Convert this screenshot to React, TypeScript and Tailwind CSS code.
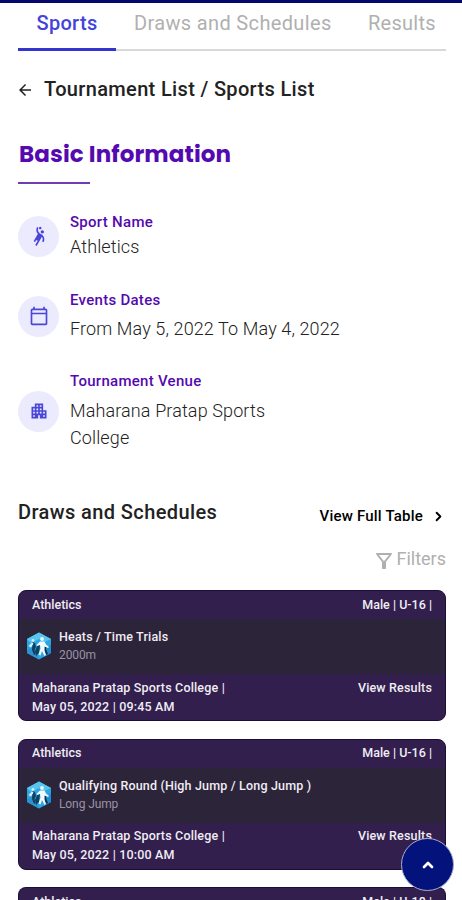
import React from 'react';
import {
  MdArrowBack,
  MdSportsHandball,
  MdOutlineCalendarToday,
  MdOutlineApartment,
  MdOutlineFilterAlt,
} from 'react-icons/md';
import { ChevronRight, ChevronUp } from 'lucide-react';

interface Fixture {
  title: string;
  event: string;
  category: string;
  time: string;
}

const fixtures: Fixture[] = [
  { title: 'Heats / Time Trials', event: '2000m', category: 'Male | U-16 |', time: 'May 05, 2022 | 09:45 AM' },
  { title: 'Qualifying Round (High Jump / Long Jump )', event: 'Long Jump', category: 'Male | U-16 |', time: 'May 05, 2022 | 10:00 AM' },
];

const AthleticsLogo: React.FC = () => (
  <svg viewBox="0 0 26 28" className="w-[26px] h-7 shrink-0">
    <path d="M13 0.5 25 7v14l-12 6.5L1 21V7z" fill="#2ba6e3" />
    <path d="M13 0.5 25 7l-7 3-5-3-8 4-4-4z" fill="#58c5ef" />
    <path d="M1 18l7-3 5 12.5L1 21z" fill="#2b93cf" />
    <path d="M18 19l7-7v9l-7 4z" fill="#1c8dd1" />
    <path d="M12 12l2 1-1 8-3 3-1-5z" fill="#12405f" />
    <path d="M19 12l2 2-1 3 2 5-2 1-2-5z" fill="#0f3450" />
    <circle cx="16" cy="7" r="1.9" fill="#e9f8ff" />
    <path d="M14 9.500h4.500l1.500 3 3 2.500-1 1-3.500-1.500v4l1.500 4.500-1.500 1-2.500-5-1.500 4.500-2-1 2-6-.5-3.500-2.500 1-1-1z" fill="#f1fbff" />
    <path d="M6.500 10l2.500 1 1 4-1.500 3 1 4-1.500 1-2-5z" fill="#12405f" />
    <circle cx="7" cy="8.500" r="1.400" fill="#c5ecfb" />
    <path d="M2.500 14l3.500-3.500 1.500 1-2.500 4z" fill="#d8f3fd" />
  </svg>
);

interface InfoRowProps {
  icon: React.ReactNode;
  label: string;
  className: string;
  valueClassName: string;
  children: React.ReactNode;
}

const InfoRow: React.FC<InfoRowProps> = ({ icon, label, className, valueClassName, children }) => (
  <div className={`flex items-center gap-[11px] ${className}`}>
    <div className="flex w-[41px] h-[41px] shrink-0 items-center justify-center rounded-full bg-[#ecebfe] text-[#4a46d8]">
      {icon}
    </div>
    <div>
      <div className="text-[15px] leading-5 font-medium tracking-[0.28px] text-[#5509b0]">{label}</div>
      <div className={`text-[18px] leading-[27px] font-light tracking-[0.12px] text-[#222222] ${valueClassName}`}>
        {children}
      </div>
    </div>
  </div>
);

const CardHeader: React.FC<{ category: string }> = ({ category }) => (
  <div className="flex h-7 items-center justify-between px-[13px]">
    <span className="tracking-normal">Athletics</span>
    <span className="tracking-normal">{category}</span>
  </div>
);

const FixtureCard: React.FC<{ fixture: Fixture }> = ({ fixture }) => (
  <div className="h-[131px] shrink-0 overflow-hidden rounded-lg border border-[#1c0c3b] bg-[#321f4d] text-[12.5px] font-medium tracking-[0.17px] text-[#f0edf4]">
    <CardHeader category={fixture.category} />
    <div className="flex h-[55px] items-center gap-[7px] bg-[#2c2439] pb-px pl-[7px]">
      <AthleticsLogo />
      <div className="leading-[18px]">
        <div>{fixture.title}</div>
        <div className="text-[12px] font-normal tracking-[-0.1px] text-[#9a93a5]">{fixture.event}</div>
      </div>
    </div>
    <div className="flex justify-between px-[13px] pt-[3.5px] leading-[19px]">
      <div>
        <div>Maharana Pratap Sports College |</div>
        <div>{fixture.time}</div>
      </div>
      <span>View Results</span>
    </div>
  </div>
);

const App: React.FC = () => {
  return (
    <div className="relative flex h-[900px] w-[462px] flex-col overflow-hidden bg-white font-['Roboto','Liberation_Sans',sans-serif]">
      <div className="h-[3px] shrink-0 bg-[#06066c]" />
      <div className="flex flex-col pr-4 pl-[18px]">
        <nav className="flex h-12 border-b-2 border-[#d8d8d8] text-[20px] leading-6 text-[#b0b0b0]">
          <div className="h-12 w-[98px] shrink-0 border-b-3 border-[#3434d0] pt-2 text-center font-medium tracking-[0.3px] text-[#4343dc]">
            Sports
          </div>
          <div className="ml-[18px] pt-2 whitespace-nowrap tracking-[0.35px]">Draws and Schedules</div>
          <div className="ml-auto pt-2 pr-[10px] tracking-[0.3px]">Results</div>
        </nav>

        <div className="mt-[26px] flex h-6 items-center text-[20px] font-medium tracking-[0.34px] text-[#222222]">
          <MdArrowBack className="-ml-0.5 mt-px w-[18px] h-[18px]" />
          <span className="ml-[10px]">Tournament List / Sports List</span>
        </div>

        <h1 className="mt-[37px] h-8 pl-px font-['Poppins','Inter',sans-serif] text-[23px] leading-8 font-bold tracking-[0.1px] text-[#5509b0]">
          Basic Information
        </h1>
        <div className="mt-3 h-0.5 w-[72px] bg-[#713bb4]" />

        <InfoRow
          icon={<MdSportsHandball className="w-5 h-5" />}
          label="Sport Name"
          className="mt-[28px]"
          valueClassName="mt-px"
        >
          Athletics
        </InfoRow>
        <InfoRow
          icon={<MdOutlineCalendarToday className="w-5 h-5" />}
          label="Events Dates"
          className="mt-[30px]"
          valueClassName="mt-[5px]"
        >
          From May 5, 2022 To May 4, 2022
        </InfoRow>
        <InfoRow
          icon={<MdOutlineApartment className="w-5 h-5" />}
          label="Tournament Venue"
          className="mt-[29px]"
          valueClassName="mt-[6px]"
        >
          Maharana Pratap Sports
          <br />
          College
        </InfoRow>

        <div className="mt-[49px] flex h-7 items-start justify-between text-[#222222]">
          <h2 className="text-[20px] leading-6 font-medium tracking-[0.4px]">Draws and Schedules</h2>
          <div className="mt-1 flex h-6 items-center text-[15px] font-medium tracking-[0.2px] text-black">
            View Full Table
            <ChevronRight className="ml-2 w-[15px] h-[15px]" strokeWidth={3} />
          </div>
        </div>
        <div className="mt-[18px] flex h-6 items-center justify-end text-[18px] text-[#b0b0b0]">
          <MdOutlineFilterAlt className="mt-[5px] w-6 h-6" />
          Filters
        </div>

        <div className="mt-[20px] flex flex-col gap-[17.6px]">
          {fixtures.map((fixture) => (
            <FixtureCard key={fixture.time} fixture={fixture} />
          ))}
          {/* next card, only its header is in view */}
          <div className="h-7 rounded-t-lg border border-b-0 border-[#1c0c3b] bg-[#321f4d] text-[12.5px] font-medium text-[#f0edf4]">
            <CardHeader category="Male | U-18 |" />
          </div>
        </div>
      </div>

      <button
        aria-label="Back to top"
        className="absolute top-[838px] left-[401px] flex w-[53px] h-[53px] items-center justify-center rounded-full border border-[#a9b0d0] bg-[#04127c] text-white"
      >
        <ChevronUp className="w-4 h-4" strokeWidth={4} />
      </button>
    </div>
  );
};

export default App;
